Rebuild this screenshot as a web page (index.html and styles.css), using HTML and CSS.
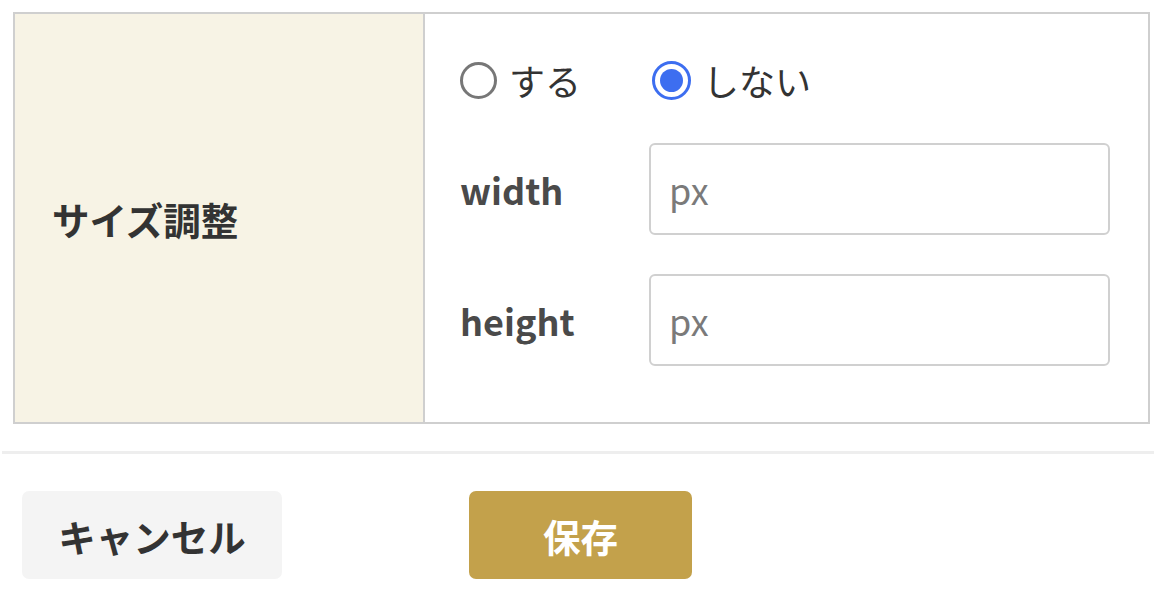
FILE: index.html
```html
<!DOCTYPE html>
<html lang="ja">
<head>
<meta charset="utf-8">
<link rel="stylesheet" href="styles.css">
</head>
<body>
<div class="panel">
  <div class="table">
    <div class="th">サイズ調整</div>
    <div class="td">
      <div class="row radios">
        <label class="radio"><span class="dot"></span><span>する</span></label>
        <label class="radio"><span class="dot checked"></span><span>しない</span></label>
      </div>
      <div class="row">
        <span class="name">width</span>
        <div class="input"><span class="ph">px</span></div>
      </div>
      <div class="row">
        <span class="name">height</span>
        <div class="input"><span class="ph">px</span></div>
      </div>
    </div>
  </div>
</div>
<div class="sep"></div>
<div class="actions">
  <button class="btn cancel">キャンセル</button>
  <button class="btn save">保存</button>
</div>
</body>
</html>
```
FILE: styles.css
```css
html, body {
  margin: 0;
  padding: 0;
  background: #fff;
}
body {
  font-family: "Noto Sans CJK JP", "Noto Sans", sans-serif;
  color: #333;
  width: 1154px;
}
.panel {
  padding: 12px 4px 0 13px;
}
.table {
  display: grid;
  grid-template-columns: 410px 1fr;
  border: 2px solid #cfcfcf;
}
.th {
  background: #f7f3e5;
  border-right: 2px solid #cfcfcf;
  display: flex;
  align-items: center;
  padding-left: 37px;
  font-size: 37.5px;
  font-weight: 700;
  color: #333;
}
.td {
  padding: 46px 38px 56px 35px;
  display: flex;
  flex-direction: column;
  gap: 39px;
}
.row {
  display: grid;
  grid-template-columns: 189px 1fr;
  align-items: center;
}
.radios {
  height: 40px;
  margin-bottom: 4px;
}
.radio {
  display: flex;
  align-items: center;
  gap: 12px;
  font-size: 36px;
  color: #333;
  line-height: 40px;
}
.dot {
  box-sizing: border-box;
  width: 37px;
  height: 37px;
  border-radius: 50%;
  border: 3px solid #777;
  background: #fff;
  flex: none;
}
.dot.checked {
  width: 39px;
  height: 39px;
  margin-left: 3px;
  border: 3px solid #3d6ef0;
  position: relative;
}
.dot.checked::after {
  content: "";
  position: absolute;
  left: 5px;
  top: 5px;
  width: 23px;
  height: 23px;
  border-radius: 50%;
  background: #3d6ef0;
}
.name {
  font-size: 36px;
  font-weight: 700;
  color: #4a4a4a;
}
.input {
  box-sizing: border-box;
  height: 92px;
  border: 2px solid #d0d0d0;
  border-radius: 6px;
  display: flex;
  align-items: center;
  padding-left: 18px;
}
.ph {
  font-size: 36px;
  color: #7a7a7a;
}
.sep {
  margin: 27px 0 0 2px;
  height: 3px;
  background: #eeeeee;
}
.actions {
  display: flex;
  gap: 187px;
  padding: 37px 0 0 22px;
}
.btn {
  font-family: "Noto Sans CJK JP", "Noto Sans", sans-serif;
  font-size: 37.5px;
  font-weight: 700;
  height: 88px;
  border: none;
  border-radius: 7px;
  padding: 0;
}
.cancel {
  width: 260px;
  background: #f4f4f4;
  color: #333;
}
.save {
  width: 223px;
  background: #c3a14b;
  color: #fff;
}
```
